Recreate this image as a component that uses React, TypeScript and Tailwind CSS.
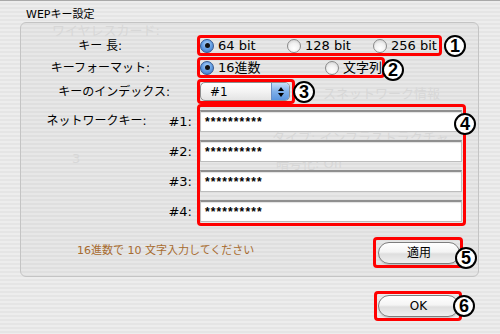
import type { ReactNode } from 'react'

const JP = "font-['DejaVu_Sans','Noto_Sans_CJK_JP',sans-serif]"

function Marker({ n, className }: { n: number; className: string }) {
  return (
    <span
      className={`absolute z-20 flex h-[22px] w-[22px] items-center justify-center rounded-full border-2 border-black bg-white font-['Liberation_Sans',sans-serif] text-[18px] font-bold leading-none text-black ${className}`}
    >
      {n}
    </span>
  )
}

function RedBox({ className, children }: { className: string; children: ReactNode }) {
  return (
    <div className={`relative rounded-[4px] border-[3px] border-[#ff0000] ${className}`}>
      {children}
    </div>
  )
}

function Radio({ checked, label, className = '' }: { checked?: boolean; label: string; className?: string }) {
  return (
    <div className={`flex items-center gap-[4px] ${className}`}>
      {checked ? (
        <span className="flex h-[14px] w-[14px] shrink-0 items-center justify-center rounded-full border border-[#35588f] bg-[radial-gradient(circle_at_50%_35%,#b9d8f7_0%,#6aa3e6_45%,#2f6dc4_100%)]">
          <span className="h-[5px] w-[5px] rounded-full bg-[#111]" />
        </span>
      ) : (
        <span className="h-[14px] w-[14px] shrink-0 rounded-full border border-[#8a8a8a] bg-[radial-gradient(circle_at_50%_70%,#ffffff_0%,#f1f1f1_50%,#c9c9c9_100%)]" />
      )}
      <span className="whitespace-nowrap text-[13px] leading-none text-black">{label}</span>
    </div>
  )
}

function Field() {
  return (
    <div className="flex h-[22px] w-[262px] items-center border border-[#bdbdbd] border-t-2 border-t-[#8f8f8f] bg-white pl-[4px] shadow-[inset_0_1px_1px_rgba(0,0,0,0.12)]">
      <span className="font-['Liberation_Sans',sans-serif] text-[12px] font-bold leading-none tracking-[1.1px] text-black">
        **********
      </span>
    </div>
  )
}

function AquaButton({ label }: { label: string }) {
  return (
    <button
      type="button"
      className="flex h-[22px] w-[82px] items-center justify-center rounded-full border border-[#7d7d7d] bg-[linear-gradient(180deg,#ffffff_0%,#f4f4f4_45%,#dedede_55%,#f0f0f0_100%)] text-[12px] leading-none text-black shadow-[0_1px_1px_rgba(0,0,0,0.15)]"
    >
      {label}
    </button>
  )
}

// faint text of the window behind the sheet
const ghosts = [
  { t: 'ワイヤレスカード:', c: 'left-[52px] top-[22px]' },
  { t: 'スネットワーク情報', c: 'left-[323px] top-[85px]' },
  { t: 'タイプ: インフラストラクチャ', c: 'left-[272px] top-[129px]' },
  { t: '暗号化: Off', c: 'left-[276px] top-[155px]' },
  { t: '3', c: 'left-[72px] top-[150px]' },
]

export default function App() {
  return (
    <div
      className={`relative h-[334px] w-[500px] overflow-hidden border-t border-t-[#a9a9a9] bg-[repeating-linear-gradient(180deg,#ededed_0px,#ededed_2px,#e5e5e5_2px,#e5e5e5_4px)] ${JP} text-black`}
    >
      <div className="pointer-events-none absolute inset-0 z-0">
        {ghosts.map((g) => (
          <span key={g.t} className={`absolute whitespace-nowrap text-[13px] leading-[16px] text-[#dddddd] ${g.c}`}>
            {g.t}
          </span>
        ))}
      </div>

      <div className="relative z-10 flex flex-col">
        <div className="flex h-[21px] items-end pl-[26px] text-[11px] leading-[14px]">WEPキー設定</div>

        <div className="ml-[20px] flex h-[255px] w-[459px] flex-col rounded-[6px] border border-[#c4c4c4] bg-[rgba(0,0,0,0.025)] pt-[12px]">
          {/* key length */}
          <div className="flex items-center">
            <div className="w-[176px] pr-[75px] text-right text-[12px] leading-none">キー 長:</div>
            <RedBox className="flex h-[21px] w-[245px] items-center">
              <Radio checked label="64 bit" className="w-[87px]" />
              <Radio label="128 bit" className="w-[86px]" />
              <Radio label="256 bit" />
              <Marker n={1} className="-right-[27px] top-1/2 -translate-y-1/2" />
            </RedBox>
          </div>

          {/* key format */}
          <div className="mt-[1px] flex items-center">
            <div className="w-[176px] pr-[47px] text-right text-[12px] leading-none">キーフォーマット:</div>
            <RedBox className="flex h-[21px] w-[188px] items-center">
              <Radio checked label="16進数" className="w-[131px]" />
              <Radio label="文字列" />
              <Marker n={2} className="-right-[22px] top-[-1px]" />
            </RedBox>
          </div>

          {/* key index */}
          <div className="mt-[1px] flex items-center">
            <div className="w-[176px] pr-[27px] text-right text-[12px] leading-none">キーのインデックス:</div>
            <RedBox className="flex h-[25px] w-[98px] items-center">
              <div className="flex h-[19px] w-[90px] items-stretch overflow-hidden rounded-[5px] border border-[#8e8e8e] bg-[linear-gradient(180deg,#ffffff_0%,#f3f3f3_50%,#e4e4e4_100%)]">
                <span className="flex flex-1 items-center pl-[9px] text-[12px] leading-none">#1</span>
                <span className="flex w-[18px] flex-col items-center justify-center gap-[2px] border-l border-[#6b8fc4] bg-[linear-gradient(180deg,#c9e0f8_0%,#7fb0ea_50%,#5b95de_100%)]">
                  <span className="h-0 w-0 border-x-[3px] border-b-[4px] border-x-transparent border-b-black" />
                  <span className="h-0 w-0 border-x-[3px] border-t-[4px] border-x-transparent border-t-black" />
                </span>
              </div>
              <Marker n={3} className="-right-[23px] top-1/2 -translate-y-1/2" />
            </RedBox>
          </div>

          {/* network keys */}
          <div className="flex items-start">
            <div className="flex w-[176px] flex-col gap-[8px] pt-[6px] pr-[5px]">
              {['#1:', '#2:', '#3:', '#4:'].map((k, i) => (
                <div key={k} className="flex h-[22px] items-center justify-end text-[12px] leading-none">
                  {i === 0 && <span className="mr-[22px]">ネットワークキー:</span>}
                  <span className="text-[13px]">{k}</span>
                </div>
              ))}
            </div>
            <RedBox className="flex w-[269px] flex-col gap-[8px] pt-[3px] pb-[1px]">
              <Field />
              <Field />
              <Field />
              <Field />
              <Marker n={4} className="-right-[13px] top-[6px]" />
            </RedBox>
          </div>

          {/* hint + apply */}
          <div className="mt-[11px] flex items-start justify-between pr-[15px]">
            <span className="mt-[7px] pl-[56px] text-[11px] leading-[14px] text-[#a76b2f]">
              16進数で 10 文字入力してください
            </span>
            <RedBox className="flex h-[31px] w-[90px] items-center pl-[2px]">
              <AquaButton label="適用" />
              <Marker n={5} className="-right-[17px] top-[7px]" />
            </RedBox>
          </div>
        </div>

        {/* OK */}
        <div className="mt-[14px] flex justify-end pr-[38px]">
          <RedBox className="flex h-[30px] w-[88px] items-center pl-[1px]">
            <AquaButton label="OK" />
            <Marker n={6} className="-right-[16px] top-1/2 -translate-y-1/2" />
          </RedBox>
        </div>
      </div>
    </div>
  )
}
